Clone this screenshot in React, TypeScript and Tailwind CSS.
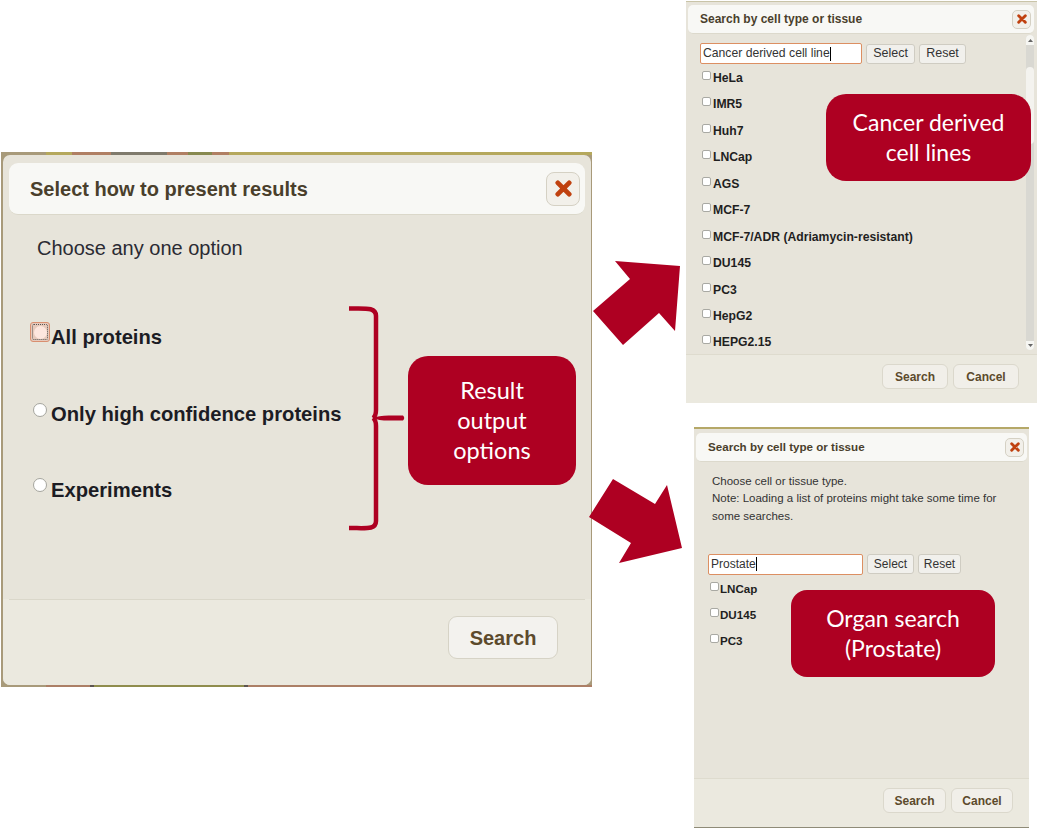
const FONT = "font-['Liberation_Sans',Arial,sans-serif]";

function Radio({ focused }: { focused?: boolean }) {
  if (focused) {
    return (
      <span className="flex h-[20px] w-[20px] shrink-0 items-center justify-center rounded-[3px] border border-[#d98f70] bg-[#e6c9bb]">
        <span className="flex h-[16px] w-[16px] items-center justify-center rounded-[2px] border border-dotted border-[#555]">
          <span className="h-[13px] w-[13px] rounded-full bg-[#fde6de]" />
        </span>
      </span>
    );
  }
  return <span className="block h-[14px] w-[14px] shrink-0 rounded-full border border-[#a5a59e] bg-white" />;
}

function CloseButton({ size }: { size: "lg" | "sm" }) {
  const box = size === "lg" ? "h-[34px] w-[34px] rounded-[8px]" : "h-[19px] w-[19px] rounded-[5px]";
  const icon = size === "lg" ? 17 : 10;
  return (
    <span className={`flex items-center justify-center border border-[#d5d1c4] bg-[#f2f0ea] ${box}`}>
      <svg width={icon} height={icon} viewBox="0 0 12 12">
        <path d="M2 2 L10 10 M10 2 L2 10" stroke="#c0410f" strokeWidth="3.4" strokeLinecap="round" />
      </svg>
    </span>
  );
}

function Check({ label, compact }: { label: string; compact?: boolean }) {
  return (
    <div className={`flex items-start ${compact ? "h-[26px]" : "h-[26.45px]"}`}>
      <span className="mt-[0px] h-[9px] w-[9px] shrink-0 rounded-[2px] border border-[#a9a9a3] bg-white" />
      <span className={`mt-[-1px] font-bold leading-[16px] text-[#1f1f1f] ${compact ? "ml-[1px] text-[11.6px]" : "ml-[2px] text-[12.2px]"}`}>{label}</span>
    </div>
  );
}

function SmallBtn({ children, w, text }: { children: string; w: string; text: string }) {
  return (
    <span className={`flex h-[20px] items-center justify-center rounded-[3px] border border-[#cfccc2] bg-[#f1f0ec] leading-none text-[#333] ${w} ${text}`}>
      {children}
    </span>
  );
}

function FootBtn({ children, w }: { children: string; w: string }) {
  return (
    <span className={`flex h-[25px] items-center justify-center rounded-[6px] border border-[#dbd8cc] bg-[#f1efe9] text-[12px] font-bold leading-none text-[#5c4a2c] ${w}`}>
      {children}
    </span>
  );
}

function Title({ text }: { text: string }) {
  return (
    <div className="flex h-[29px] items-center justify-between rounded-[5px] border-b border-[#dcd9cc] bg-[#f8f8f5] pl-[12px] pr-[3px]">
      <span className={`font-bold text-[#4a3f2c] ${text}`}>Search by cell type or tissue</span>
      <CloseButton size="sm" />
    </div>
  );
}

function Callout({ children, className }: { children: React.ReactNode; className: string }) {
  return (
    <div className={`absolute flex flex-col items-center justify-center bg-[#ae0022] pb-[2px] text-center font-['Lato',sans-serif] text-white ${className}`}>
      {children}
    </div>
  );
}

const cells = ["HeLa", "IMR5", "Huh7", "LNCap", "AGS", "MCF-7", "MCF-7/ADR (Adriamycin-resistant)", "DU145", "PC3", "HepG2", "HEPG2.15"];

const topStrip = [
  ["w-[45px]", "bg-[#a89a7a]"],
  ["w-[26px]", "bg-[#b5a85c]"],
  ["w-[39px]", "bg-[#b07f63]"],
  ["w-[56px]", "bg-[#7f7a6c]"],
  ["w-[21px]", "bg-[#b07f63]"],
  ["w-[24px]", "bg-[#87894f]"],
  ["w-[17px]", "bg-[#b07f63]"],
  ["flex-1", "bg-[#b5a85c]"],
];
const bottomStrip = [
  ["w-[45px]", "bg-[#a89a7a]"],
  ["w-[44px]", "bg-[#ac7f66]"],
  ["w-[4px]", "bg-[#5d5550]"],
  ["w-[150px]", "bg-[#8f8d4d]"],
  ["w-[4px]", "bg-[#5d5550]"],
  ["flex-1", "bg-[#ac7f66]"],
];

export default function App() {
  return (
    <div className={`relative h-[829px] w-[1038px] overflow-hidden bg-white ${FONT}`}>
      {/* Main dialog */}
      <div className="absolute left-[1px] top-[152px] flex h-[535px] w-[591px] flex-col bg-[#a89a7a] pb-[2px] pl-[2px] pr-[1px] pt-[3px]">
        <div className="absolute left-0 right-0 top-0 flex h-[3px]">
          {topStrip.map(([w, c], i) => <span key={i} className={`${w} ${c}`} />)}
        </div>
        <div className="absolute bottom-0 left-0 right-0 flex h-[2px]">
          {bottomStrip.map(([w, c], i) => <span key={i} className={`${w} ${c}`} />)}
        </div>
        <div className="flex min-h-0 flex-1 flex-col rounded-[7px] bg-[#e7e4da] px-[6px] pt-[8px]">
          <div className="flex h-[52px] items-center justify-between rounded-[9px] border-b border-[#dbd8ca] bg-[#f8f8f5] pl-[21px] pr-[5px]">
            <span className="text-[20px] font-bold text-[#4a3f2c]">Select how to present results</span>
            <CloseButton size="lg" />
          </div>
          <p className="ml-[28px] mt-[20px] text-[20px] leading-[26px] text-[#2b2b33]">Choose any one option</p>
          <div className="ml-[21px] mt-[61px] flex flex-col">
            <div className="flex h-[76.5px] items-start">
              <Radio focused />
              <span className="ml-[1px] mt-[2px] text-[20.2px] font-bold leading-[26px] text-[#1c1c24]">All proteins</span>
            </div>
            <div className="flex h-[76.5px] items-start pl-[3px]">
              <span className="mt-[4px] block"><Radio /></span>
              <span className="ml-[4px] mt-[2px] text-[20.2px] font-bold leading-[26px] text-[#1c1c24]">Only high confidence proteins</span>
            </div>
            <div className="flex items-start pl-[3px]">
              <span className="mt-[3px] block"><Radio /></span>
              <span className="ml-[4px] mt-[2px] text-[20.2px] font-bold leading-[26px] text-[#1c1c24]">Experiments</span>
            </div>
          </div>
          <div className="mx-[-6px] mt-auto rounded-b-[7px] bg-[#ebe9df] px-[6px]">
            <div className="flex h-[86px] items-start justify-end border-t border-[#dad7ca] pr-[27px] pt-[16px]">
              <span className="flex h-[43px] w-[110px] items-center justify-center rounded-[9px] border border-[#d6d3c6] bg-[#f3f2ee] text-[20px] font-bold leading-none text-[#5c4a2c]">Search</span>
            </div>
          </div>
        </div>
      </div>

      {/* Top right dialog */}
      <div className="absolute left-[686px] top-[1px] flex h-[402px] w-[351px] flex-col border-t border-[#c9c4a8] bg-[#e7e4da] pl-[2px] pr-[3px] pt-[3px]">
        <Title text="text-[12px]" />
        <div className="relative min-h-0 flex-1 overflow-hidden pl-[12px] pt-[9px]">
          <div className="flex items-center gap-[4px]">
            <span className="flex h-[21px] w-[162px] items-center rounded-[2px] border border-[#dc8f62] bg-white pl-[2px] text-[12.2px] leading-none text-[#333]">Cancer derived cell line<span className="h-[14px] w-px bg-black" /></span>
            <SmallBtn w="w-[49px]" text="text-[12.5px]">Select</SmallBtn>
            <SmallBtn w="w-[47px]" text="text-[12.5px]">Reset</SmallBtn>
          </div>
          <div className="ml-[2px] mt-[7px] flex flex-col">
            {cells.map((c) => <Check key={c} label={c} />)}
          </div>
          <div className="absolute bottom-[4px] right-0 top-[1px] flex w-[8px] flex-col items-center rounded-[4px] bg-[#d9d8d2]">
            <span className="flex h-[10px] w-full items-center justify-center rounded-t-[4px] bg-[#f6f6f2] text-[#666]">
              <svg width="5" height="3" viewBox="0 0 5 3"><path d="M2.5 0 L5 3 L0 3 Z" fill="currentColor" /></svg>
            </span>
            <span className="mt-[22px] h-[77px] w-full rounded-[4px] bg-[#f4f3ef]" />
            <span className="mt-auto flex h-[9px] w-full items-center justify-center rounded-b-[4px] bg-[#f6f6f2] text-[#666]">
              <svg width="5" height="3" viewBox="0 0 5 3"><path d="M0 0 L5 0 L2.5 3 Z" fill="currentColor" /></svg>
            </span>
          </div>
        </div>
        <div className="mx-[-2px] mr-[-3px] flex h-[49px] shrink-0 items-start justify-end gap-[5px] border-t border-[#dedbce] bg-[#ebe9df] pr-[18px] pt-[9px]">
          <FootBtn w="w-[66px]">Search</FootBtn>
          <FootBtn w="w-[66px]">Cancel</FootBtn>
        </div>
      </div>

      {/* Bottom right dialog */}
      <div className="absolute left-[694px] top-[427px] flex h-[401px] w-[335px] flex-col border-t-[2px] border-t-[#b5a868] bg-[#e7e4da] px-[2px] pt-[4px]">
        <Title text="text-[11.6px]" />
        <div className="flex min-h-0 flex-1 flex-col pl-[12px] pt-[11px]">
          <p className="ml-[4px] w-[300px] text-[11.5px] leading-[17.3px] text-[#333]">
            Choose cell or tissue type.<br />Note: Loading a list of proteins might take some time for some searches.
          </p>
          <div className="mt-[29px] flex items-center gap-[4px]">
            <span className="flex h-[21px] w-[155px] items-center rounded-[2px] border border-[#dc8f62] bg-white pl-[2px] text-[12px] leading-none text-[#333]">Prostate<span className="h-[14px] w-px bg-black" /></span>
            <SmallBtn w="w-[47px]" text="text-[12px]">Select</SmallBtn>
            <SmallBtn w="w-[43px]" text="text-[12px]">Reset</SmallBtn>
          </div>
          <div className="ml-[2px] mt-[7px] flex flex-col">
            {["LNCap", "DU145", "PC3"].map((c) => <Check key={c} label={c} compact />)}
          </div>
        </div>
        <div className="mx-[-2px] flex h-[50px] shrink-0 items-start justify-end gap-[5px] border-b border-t border-b-[#8f8b78] border-t-[#dedbce] bg-[#ebe9df] pr-[16px] pt-[9px]">
          <FootBtn w="w-[63px]">Search</FootBtn>
          <FootBtn w="w-[62px]">Cancel</FootBtn>
        </div>
      </div>

      {/* Annotations */}
      <svg className="absolute left-0 top-0" width="1038" height="829" viewBox="0 0 1038 829">
        <path d="M349 308.5 C366 308.5 376 307 376 316 L376 410 Q376 416 373 418 M349 528 C366 528 376 530 376 521 L376 426 Q376 420 373 418" fill="none" stroke="#ae0022" strokeWidth="4.5" />
        <path d="M372 418 Q380 415 392 415.5 L403 415.5 Q405.5 418 403 420.5 L392 420.5 Q380 421 372 418 Z" fill="#ae0022" />
        <polygon points="615,261 680,266 675,331 659,313 623,345 593,311 630,279" fill="#ae0022" />
        <polygon points="613,479 655,504 667,485 682,548 619,563 631,543 589,517" fill="#ae0022" />
      </svg>
      <Callout className="left-[408px] top-[356px] h-[129px] w-[168px] rounded-[20px] text-[23.5px] leading-[30px]">
        <span>Result</span><span>output</span><span>options</span>
      </Callout>
      <Callout className="left-[826px] top-[94px] h-[87px] w-[205px] rounded-[20px] text-[23px] leading-[30px]">
        <span>Cancer derived</span><span>cell lines</span>
      </Callout>
      <Callout className="left-[791px] top-[590px] h-[87px] w-[204px] rounded-[16px] text-[23px] leading-[30px]">
        <span>Organ search</span><span>(Prostate)</span>
      </Callout>
    </div>
  );
}
